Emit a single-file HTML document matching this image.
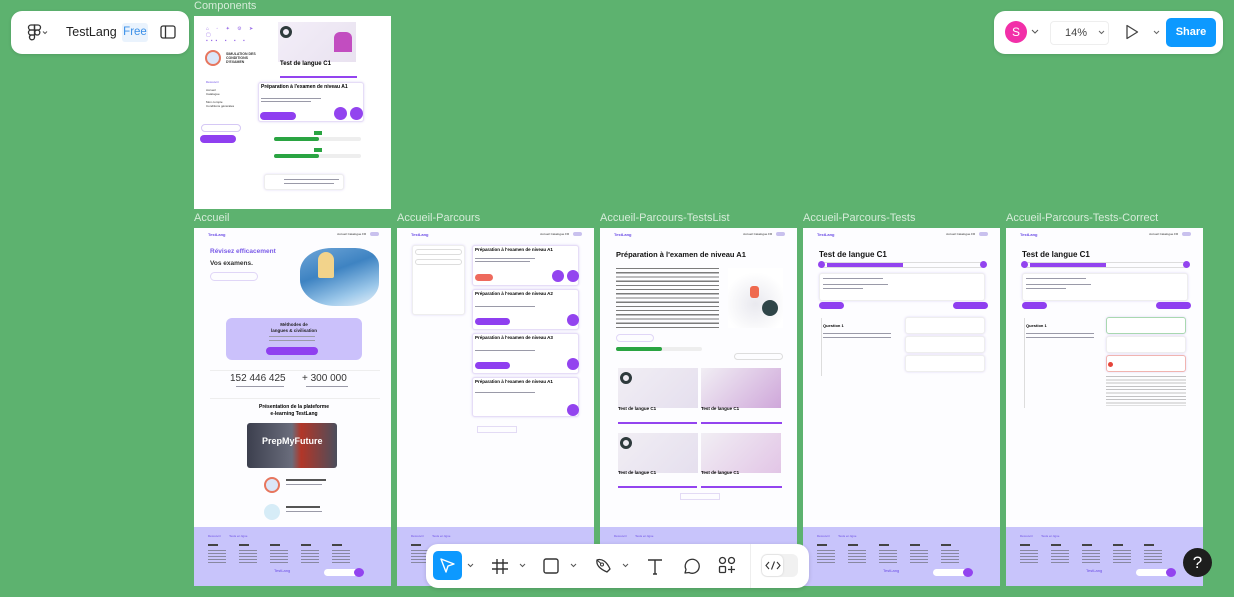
<!DOCTYPE html>
<html><head><meta charset="utf-8">
<style>
*{margin:0;padding:0;box-sizing:border-box}
body{width:1234px;height:597px;background:#5db26f;font-family:"Liberation Sans",sans-serif;position:relative;overflow:hidden}
.a{position:absolute}
.lbl{position:absolute;font-size:11px;color:#d6ecd9}
.fr{position:absolute;top:228px;width:197px;height:358px;background:#fdfdff;overflow:hidden}
.fr .a{position:absolute}
.nav{top:4px;left:14px;font-size:4px;color:#6b4ce6;font-weight:bold}
.navr{top:4px;right:12px;font-size:3px;color:#333}
.tog{display:inline-block;width:9px;height:4px;background:#c9c1ee;border-radius:2px;vertical-align:middle;margin-left:3px}
.ft{left:0;top:299px;width:197px;height:59px;background:#c8c4fb}
.ftl{left:14px;top:306px;font-size:3px;color:#6b4ce6}
.ftc{left:14px;top:316px;width:150px;height:2px;background:repeating-linear-gradient(90deg,#444 0 10px,transparent 10px 31px)}
.ftd{left:14px;top:322px;width:150px;height:14px;background:repeating-linear-gradient(180deg,#8888a0 0 1px,transparent 1px 3px);-webkit-mask:repeating-linear-gradient(90deg,#000 0 18px,transparent 18px 31px);mask:repeating-linear-gradient(90deg,#000 0 18px,transparent 18px 31px)}
.ftn{left:80px;top:340px;font-size:4px;color:#6b4ce6}
.ftb{left:130px;top:341px;width:36px;height:7px;background:#fff;border-radius:4px}
.ftp{left:160px;top:340px;width:10px;height:9px;border-radius:50%;background:#9344ef}
.t{height:1.5px;background:#9a9aa8;position:absolute}
.pb{background:#8f3ff0;border-radius:4px;position:absolute}
.card{position:absolute;background:#fff;border:1px solid #e6ddf7;border-radius:3px;box-shadow:0 0 2px rgba(150,120,220,.3)}
.circ{position:absolute;border-radius:50%;background:#9344ef}
.pill{position:absolute;background:#fff;border-radius:10px;box-shadow:0 1px 3px rgba(0,0,0,.12)}
</style></head><body>

<div class="pill" style="left:11px;top:11px;width:178px;height:43px;border-radius:11px">
  <svg class="a" style="left:16px;top:13px" width="34" height="18" viewBox="0 0 34 18">
    <g fill="none" stroke="#333" stroke-width="1.3"><path d="M4 1h3.5v5H4a2.5 2.5 0 0 1 0-5z"/><path d="M7.5 1H11a2.5 2.5 0 0 1 0 5H7.5z"/><path d="M4 6h3.5v5H4a2.5 2.5 0 0 1 0-5z"/><circle cx="10.3" cy="8.5" r="2.5"/><path d="M4 11h3.5v2.5A2.5 2.5 0 1 1 4 11z"/></g>
    <path d="M16 7.5l2 2 2-2" fill="none" stroke="#555" stroke-width="1"/>
  </svg>
  <div class="a" style="left:55px;top:14px;font-size:12.5px;color:#222">TestLang</div>
  <div class="a" style="left:111px;top:12px;width:26px;height:19px;font-size:11.5px;color:#3a8fe8;background:#eaf3fd;border-radius:3px;text-align:center;line-height:19px">Free</div>
  <svg class="a" style="left:149px;top:14px" width="16" height="14"><rect x="1" y="1" width="14" height="12" rx="2" fill="none" stroke="#333" stroke-width="1.3"/><line x1="5.5" y1="1" x2="5.5" y2="13" stroke="#333" stroke-width="1.3"/></svg>
</div>

<div class="pill" style="left:994px;top:11px;width:229px;height:43px;border-radius:11px">
  <div class="a" style="left:11px;top:10px;width:22px;height:22px;border-radius:50%;background:#f22fa8;color:#fff;font-size:12px;text-align:center;line-height:22px">S</div>
  <svg class="a" style="left:37px;top:18px" width="8" height="6"><path d="M1 1l3 3 3-3" fill="none" stroke="#555"/></svg>
  <div class="a" style="left:56px;top:10px;width:59px;height:24px;border:1px solid #eee;border-radius:4px;font-size:11px;color:#444;line-height:22px;padding-left:14px">14%</div>
  <svg class="a" style="left:104px;top:19px" width="7" height="5"><path d="M1 1l2.5 2.5L6 1" fill="none" stroke="#666"/></svg>
  <svg class="a" style="left:131px;top:13px" width="14" height="16"><path d="M2 1.5v13l10.5-6.5z" fill="none" stroke="#444" stroke-width="1.3" stroke-linejoin="round"/></svg>
  <svg class="a" style="left:159px;top:19px" width="7" height="5"><path d="M1 1l2.5 2.5L6 1" fill="none" stroke="#666"/></svg>
  <div class="a" style="left:172px;top:7px;width:50px;height:29px;border-radius:5px;background:#0d99ff;color:#fff;font-size:11px;font-weight:bold;text-align:center;line-height:29px">Share</div>
</div>

<div class="lbl" style="left:194px;top:0px">Components</div>
<div class="a" style="left:194px;top:16px;width:197px;height:193px;background:#fff">
  <div class="a" style="left:12px;top:10px;width:60px;height:18px;font-size:5px;color:#9a6ee8;letter-spacing:3px">⌂ ◦ ✦ ⚙ ➤ ▢<br>▪▪▪ ▪ ▪ ▪</div>
  <div class="a" style="left:11px;top:34px;width:16px;height:16px;border-radius:50%;background:#dbe6f8;border:2px solid #e7765e"></div>
  <div class="a" style="left:32px;top:36px;font-size:3.5px;font-weight:bold;color:#333;width:40px">SIMULATION DES CONDITIONS D'EXAMEN</div>
  <div class="a" style="left:84px;top:6px;width:78px;height:40px;background:linear-gradient(135deg,#f3eef8,#e9e2f0)"></div>
  <div class="a" style="left:86px;top:10px;width:12px;height:12px;border-radius:50%;border:3px solid #2e3a3c"></div>
  <div class="a" style="left:140px;top:16px;width:18px;height:20px;background:#c24dc0;border-radius:6px 6px 0 0"></div>
  <div class="a" style="left:86px;top:45px;font-size:6px;font-weight:bold">Test de langue C1</div>
  <div class="a" style="left:86px;top:60px;width:77px;height:2px;background:#9344ef"></div>
  <div class="a" style="left:12px;top:64px;font-size:3px;color:#6b4ce6">Découvrir</div>
  <div class="a" style="left:12px;top:72px;font-size:3px;color:#333;line-height:4px">Accueil<br>Catalogue<br><br>Mon compte<br>Conditions générales</div>
  <div class="card" style="left:64px;top:66px;width:106px;height:40px"></div>
  <div class="a" style="left:67px;top:68px;font-size:5px;font-weight:bold">Préparation à l'examen de niveau A1</div>
  <div class="t" style="left:67px;top:82px;width:60px;height:1px"></div>
  <div class="t" style="left:67px;top:85px;width:50px;height:1px"></div>
  <div class="pb" style="left:66px;top:96px;width:36px;height:8px"></div>
  <div class="circ" style="left:140px;top:91px;width:13px;height:13px"></div>
  <div class="circ" style="left:156px;top:91px;width:13px;height:13px"></div>
  <div class="a" style="left:7px;top:108px;width:40px;height:8px;border:1px solid #d5c8f5;border-radius:4px"></div>
  <div class="pb" style="left:6px;top:119px;width:36px;height:8px"></div>
  <div class="a" style="left:80px;top:121px;width:87px;height:4px;background:#eee;border-radius:2px"></div>
  <div class="a" style="left:80px;top:121px;width:45px;height:4px;background:#2aa442;border-radius:2px"></div>
  <div class="a" style="left:120px;top:115px;width:8px;height:4px;background:#2aa442"></div>
  <div class="a" style="left:80px;top:138px;width:87px;height:4px;background:#eee;border-radius:2px"></div>
  <div class="a" style="left:80px;top:138px;width:45px;height:4px;background:#2aa442;border-radius:2px"></div>
  <div class="a" style="left:120px;top:132px;width:8px;height:4px;background:#2aa442"></div>
  <div class="card" style="left:70px;top:158px;width:80px;height:16px;border-color:#eee"></div>
  <div class="t" style="left:90px;top:163px;width:55px;height:1px"></div>
  <div class="t" style="left:90px;top:167px;width:50px;height:1px"></div>
</div>

<div class="lbl" style="left:194px;top:212px">Accueil</div>
<div class="fr" style="left:194px">
  <div class="a nav">TestLang</div><div class="a navr">Accueil Catalogue FR <span class="tog"></span></div>
  <div class="a" style="left:16px;top:20px;font-size:6.5px;font-weight:bold;color:#7a5be8">Révisez efficacement</div>
  <div class="a" style="left:16px;top:32px;font-size:6.5px;font-weight:bold;color:#333">Vos examens.</div>
  <div class="a" style="left:16px;top:44px;width:48px;height:9px;border:1px solid #e0d6f7;border-radius:5px"></div>
  <div class="a" style="left:106px;top:20px;width:79px;height:58px;border-radius:40% 30% 40% 45%;background:linear-gradient(160deg,#6fa6d8 0%,#3e83c2 40%,#9cc8ea 75%,#e9f2fa 100%)"></div>
  <div class="a" style="left:124px;top:24px;width:16px;height:26px;background:#f2d38b;border-radius:8px 8px 2px 2px"></div>
  <div class="a" style="left:32px;top:90px;width:136px;height:42px;background:#cbc1fb;border-radius:6px"></div>
  <div class="a" style="left:32px;top:94px;width:136px;text-align:center;font-size:4.5px;font-weight:bold;color:#222;line-height:6px">Méthodes de<br>langues &amp; civilisation</div>
  <div class="t" style="left:75px;top:108px;width:46px;height:1px"></div>
  <div class="t" style="left:75px;top:112px;width:46px;height:1px"></div>
  <div class="pb" style="left:72px;top:119px;width:52px;height:8px"></div>
  <div class="a" style="left:16px;top:142px;width:170px;height:1px;background:#eee"></div>
  <div class="a" style="left:36px;top:145px;font-size:10px;color:#333">152 446 425</div>
  <div class="a" style="left:108px;top:145px;font-size:10px;color:#333">+ 300 000</div>
  <div class="t" style="left:42px;top:158px;width:48px;height:1px"></div>
  <div class="t" style="left:112px;top:158px;width:42px;height:1px"></div>
  <div class="a" style="left:16px;top:170px;width:170px;height:1px;background:#eee"></div>
  <div class="a" style="left:30px;top:176px;width:140px;text-align:center;font-size:5px;font-weight:bold;line-height:6.5px">Présentation de la plateforme<br>e-learning TestLang</div>
  <div class="a" style="left:53px;top:195px;width:90px;height:45px;border-radius:3px;background:linear-gradient(90deg,#3c3f4e,#6a6d7c 50%,#b23628 60%,#4b4e5c)"></div>
  <div class="a" style="left:68px;top:208px;font-size:9px;color:#fff;font-weight:bold">PrepMyFuture</div>
  <div class="a" style="left:70px;top:249px;width:16px;height:16px;border-radius:50%;background:#dbe6f8;border:2px solid #e7765e"></div>
  <div class="a" style="left:92px;top:251px;width:40px;height:2px;background:#555"></div>
  <div class="t" style="left:92px;top:256px;width:36px;height:1px"></div>
  <div class="a" style="left:70px;top:276px;width:16px;height:16px;border-radius:50%;background:#d6ecf7"></div>
  <div class="a" style="left:92px;top:278px;width:34px;height:2px;background:#555"></div>
  <div class="t" style="left:92px;top:283px;width:36px;height:1px"></div>
  <div class="a ft"></div><div class="a ftl">Découvrir &nbsp;&nbsp;&nbsp;&nbsp;&nbsp;&nbsp;&nbsp;&nbsp; Tests en ligne</div>
  <div class="a ftc"></div><div class="a ftd"></div><div class="a ftn">TestLang</div><div class="a ftb"></div><div class="a ftp"></div>
</div>

<div class="lbl" style="left:397px;top:212px">Accueil-Parcours</div>
<div class="fr" style="left:397px">
  <div class="a nav">TestLang</div><div class="a navr">Accueil Catalogue FR <span class="tog"></span></div>
  <div class="card" style="left:15px;top:17px;width:53px;height:70px;border-color:#eee"></div>
  <div class="a" style="left:18px;top:21px;width:47px;height:6px;border:1px solid #ddd;border-radius:3px"></div>
  <div class="a" style="left:18px;top:31px;width:47px;height:6px;border:1px solid #ddd;border-radius:3px"></div>
  <div class="card" style="left:75px;top:17px;width:107px;height:41px"></div>
  <div class="a" style="left:78px;top:19px;font-size:4.5px;font-weight:bold">Préparation à l'examen de niveau A1</div>
  <div class="t" style="left:78px;top:30px;width:60px;height:1px"></div><div class="t" style="left:78px;top:33px;width:55px;height:1px"></div>
  <div class="a" style="left:78px;top:46px;width:18px;height:7px;background:#ee6a5d;border-radius:4px"></div>
  <div class="circ" style="left:155px;top:42px;width:12px;height:12px"></div><div class="circ" style="left:170px;top:42px;width:12px;height:12px"></div>
  <div class="card" style="left:75px;top:61px;width:107px;height:41px"></div>
  <div class="a" style="left:78px;top:63px;font-size:4.5px;font-weight:bold;width:90px">Préparation à l'examen de niveau A2</div>
  <div class="t" style="left:78px;top:78px;width:60px;height:1px"></div>
  <div class="pb" style="left:78px;top:90px;width:35px;height:7px"></div><div class="circ" style="left:170px;top:86px;width:12px;height:12px"></div>
  <div class="card" style="left:75px;top:105px;width:107px;height:41px"></div>
  <div class="a" style="left:78px;top:107px;font-size:4.5px;font-weight:bold;width:90px">Préparation à l'examen de niveau A3</div>
  <div class="t" style="left:78px;top:122px;width:60px;height:1px"></div>
  <div class="pb" style="left:78px;top:134px;width:35px;height:7px"></div><div class="circ" style="left:170px;top:130px;width:12px;height:12px"></div>
  <div class="card" style="left:75px;top:149px;width:107px;height:40px"></div>
  <div class="a" style="left:78px;top:151px;font-size:4.5px;font-weight:bold">Préparation à l'examen de niveau A1</div>
  <div class="t" style="left:78px;top:164px;width:60px;height:1px"></div>
  <div class="circ" style="left:170px;top:176px;width:12px;height:12px"></div>
  <div class="a" style="left:80px;top:198px;width:40px;height:7px;border:1px solid #e3dbf5"></div>
  <div class="a ft"></div><div class="a ftl">Découvrir &nbsp;&nbsp;&nbsp;&nbsp;&nbsp;&nbsp;&nbsp;&nbsp; Tests en ligne</div>
  <div class="a ftc"></div><div class="a ftd"></div><div class="a ftn">TestLang</div><div class="a ftb"></div><div class="a ftp"></div>
</div>

<div class="lbl" style="left:600px;top:212px">Accueil-Parcours-TestsList</div>
<div class="fr" style="left:600px">
  <div class="a nav">TestLang</div><div class="a navr">Accueil Catalogue FR <span class="tog"></span></div>
  <div class="a" style="left:16px;top:22px;font-size:7.5px;font-weight:bold;color:#111">Préparation à l'examen de niveau A1</div>
  <div class="a" style="left:16px;top:40px;width:103px;height:62px;background:repeating-linear-gradient(180deg,#444 0 1.2px,transparent 1.2px 4.2px);opacity:.7"></div>
  <div class="a" style="left:128px;top:40px;width:55px;height:60px;background:radial-gradient(circle at 50% 60%,#e9e9ef,#fff 70%)"></div>
  <div class="a" style="left:150px;top:58px;width:9px;height:12px;background:#ef6a4f;border-radius:3px"></div>
  <div class="a" style="left:162px;top:72px;width:16px;height:16px;border-radius:50%;background:#2f4548"></div>
  <div class="a" style="left:16px;top:106px;width:38px;height:8px;border:1px solid #e0d6f7;border-radius:4px"></div>
  <div class="a" style="left:16px;top:119px;width:86px;height:4px;background:#eee;border-radius:2px"></div>
  <div class="a" style="left:16px;top:119px;width:46px;height:4px;background:#2aa442;border-radius:2px"></div>
  <div class="a" style="left:134px;top:125px;width:49px;height:7px;border:1px solid #ddd;border-radius:4px"></div>
  <div class="a" style="left:18px;top:140px;width:80px;height:40px;background:linear-gradient(135deg,#f1eef4,#e5dfee)"></div>
  <div class="a" style="left:101px;top:140px;width:80px;height:40px;background:linear-gradient(135deg,#f1eef4,#cfa7da)"></div>
  <div class="a" style="left:20px;top:144px;width:12px;height:12px;border-radius:50%;border:3px solid #2e3a3c"></div>
  <div class="a" style="left:18px;top:178px;font-size:4.5px;font-weight:bold">Test de langue C1</div>
  <div class="a" style="left:101px;top:178px;font-size:4.5px;font-weight:bold">Test de langue C1</div>
  <div class="a" style="left:18px;top:194px;width:79px;height:2px;background:#9344ef"></div>
  <div class="a" style="left:101px;top:194px;width:81px;height:2px;background:#9344ef"></div>
  <div class="a" style="left:18px;top:205px;width:80px;height:40px;background:linear-gradient(135deg,#f1eef4,#e5dfee)"></div>
  <div class="a" style="left:101px;top:205px;width:80px;height:40px;background:linear-gradient(135deg,#f1eef4,#e2c5e6)"></div>
  <div class="a" style="left:20px;top:209px;width:12px;height:12px;border-radius:50%;border:3px solid #2e3a3c"></div>
  <div class="a" style="left:18px;top:242px;font-size:4.5px;font-weight:bold">Test de langue C1</div>
  <div class="a" style="left:101px;top:242px;font-size:4.5px;font-weight:bold">Test de langue C1</div>
  <div class="a" style="left:18px;top:258px;width:79px;height:2px;background:#9344ef"></div>
  <div class="a" style="left:101px;top:258px;width:81px;height:2px;background:#9344ef"></div>
  <div class="a" style="left:80px;top:265px;width:40px;height:7px;border:1px solid #e3dbf5"></div>
  <div class="a ft"></div><div class="a ftl">Découvrir &nbsp;&nbsp;&nbsp;&nbsp;&nbsp;&nbsp;&nbsp;&nbsp; Tests en ligne</div>
  <div class="a ftc"></div><div class="a ftd"></div><div class="a ftn">TestLang</div><div class="a ftb"></div><div class="a ftp"></div>
</div>

<div class="lbl" style="left:803px;top:212px">Accueil-Parcours-Tests</div>
<div class="fr" style="left:803px">
  <div class="a nav">TestLang</div><div class="a navr">Accueil Catalogue FR <span class="tog"></span></div>
  <div class="a" style="left:16px;top:22px;font-size:8px;font-weight:bold;color:#111">Test de langue C1</div>
  <div class="a" style="left:16px;top:34px;width:166px;height:6px;border:1px solid #ddd;border-radius:3px"></div>
  <div class="a" style="left:24px;top:35px;width:76px;height:4px;background:#9344ef"></div>
  <div class="circ" style="left:15px;top:33px;width:7px;height:7px"></div><div class="circ" style="left:177px;top:33px;width:7px;height:7px"></div>
  <div class="card" style="left:16px;top:45px;width:166px;height:28px;border-color:#eee"></div>
  <div class="t" style="left:20px;top:50px;width:60px;height:1px"></div><div class="t" style="left:20px;top:56px;width:65px;height:1px"></div><div class="t" style="left:20px;top:60px;width:40px;height:1px"></div>
  <div class="pb" style="left:16px;top:74px;width:25px;height:7px"></div>
  <div class="pb" style="left:150px;top:74px;width:35px;height:7px"></div>
  <div class="a" style="left:18px;top:90px;width:1px;height:58px;background:#ddd"></div>
  <div class="a" style="left:20px;top:95px;font-size:4px;font-weight:bold">Question 1</div>
  <div class="t" style="left:20px;top:105px;width:68px;height:1px"></div><div class="t" style="left:20px;top:109px;width:68px;height:1px"></div>
  <div class="card" style="left:102px;top:89px;width:80px;height:17px;border-color:#eee"></div>
  <div class="card" style="left:102px;top:108px;width:80px;height:17px;border-color:#eee"></div>
  <div class="card" style="left:102px;top:127px;width:80px;height:17px;border-color:#eee"></div>
  <div class="a ft"></div><div class="a ftl">Découvrir &nbsp;&nbsp;&nbsp;&nbsp;&nbsp;&nbsp;&nbsp;&nbsp; Tests en ligne</div>
  <div class="a ftc"></div><div class="a ftd"></div><div class="a ftn">TestLang</div><div class="a ftb"></div><div class="a ftp"></div>
</div>

<div class="lbl" style="left:1006px;top:212px">Accueil-Parcours-Tests-Correct</div>
<div class="fr" style="left:1006px">
  <div class="a nav">TestLang</div><div class="a navr">Accueil Catalogue FR <span class="tog"></span></div>
  <div class="a" style="left:16px;top:22px;font-size:8px;font-weight:bold;color:#111">Test de langue C1</div>
  <div class="a" style="left:16px;top:34px;width:166px;height:6px;border:1px solid #ddd;border-radius:3px"></div>
  <div class="a" style="left:24px;top:35px;width:76px;height:4px;background:#9344ef"></div>
  <div class="circ" style="left:15px;top:33px;width:7px;height:7px"></div><div class="circ" style="left:177px;top:33px;width:7px;height:7px"></div>
  <div class="card" style="left:16px;top:45px;width:166px;height:28px;border-color:#eee"></div>
  <div class="t" style="left:20px;top:50px;width:60px;height:1px"></div><div class="t" style="left:20px;top:56px;width:65px;height:1px"></div><div class="t" style="left:20px;top:60px;width:40px;height:1px"></div>
  <div class="pb" style="left:16px;top:74px;width:25px;height:7px"></div>
  <div class="pb" style="left:150px;top:74px;width:35px;height:7px"></div>
  <div class="a" style="left:18px;top:90px;width:1px;height:90px;background:#ddd"></div>
  <div class="a" style="left:20px;top:95px;font-size:4px;font-weight:bold">Question 1</div>
  <div class="t" style="left:20px;top:105px;width:68px;height:1px"></div><div class="t" style="left:20px;top:109px;width:68px;height:1px"></div>
  <div class="card" style="left:100px;top:89px;width:80px;height:17px;border-color:#a9d8b0"></div>
  <div class="card" style="left:100px;top:108px;width:80px;height:17px;border-color:#eee"></div>
  <div class="card" style="left:100px;top:127px;width:80px;height:17px;border-color:#f1b4b0"></div>
  <div class="a" style="left:102px;top:134px;width:5px;height:5px;border-radius:50%;background:#e5453a"></div>
  <div class="a" style="left:100px;top:148px;width:80px;height:30px;background:repeating-linear-gradient(180deg,#888 0 1px,transparent 1px 3.3px);opacity:.5"></div>
  <div class="a ft"></div><div class="a ftl">Découvrir &nbsp;&nbsp;&nbsp;&nbsp;&nbsp;&nbsp;&nbsp;&nbsp; Tests en ligne</div>
  <div class="a ftc"></div><div class="a ftd"></div><div class="a ftn">TestLang</div><div class="a ftb"></div><div class="a ftp"></div>
</div>

<div class="pill" style="left:426px;top:544px;width:383px;height:44px;border-radius:12px;box-shadow:0 1px 4px rgba(0,0,0,.15)">
  <div class="a" style="left:7px;top:7px;width:29px;height:29px;background:#0d99ff;border-radius:5px"></div>
  <svg class="a" style="left:13px;top:13px" width="18" height="18"><path d="M2 2l13 5-6 2-2 6z" fill="none" stroke="#fff" stroke-width="1.4" stroke-linejoin="round"/></svg>
  <svg class="a" style="left:41px;top:19px" width="7" height="5"><path d="M1 1l2.5 2.5L6 1" fill="none" stroke="#555"/></svg>
  <svg class="a" style="left:65px;top:13px" width="18" height="18"><path d="M6 2v15M12 2v15M1 6h16M1 12h16" stroke="#333" stroke-width="1.4"/></svg>
  <svg class="a" style="left:93px;top:19px" width="7" height="5"><path d="M1 1l2.5 2.5L6 1" fill="none" stroke="#555"/></svg>
  <svg class="a" style="left:116px;top:13px" width="18" height="18"><rect x="2" y="2" width="14" height="14" rx="2" fill="none" stroke="#333" stroke-width="1.4"/></svg>
  <svg class="a" style="left:144px;top:19px" width="7" height="5"><path d="M1 1l2.5 2.5L6 1" fill="none" stroke="#555"/></svg>
  <svg class="a" style="left:168px;top:12px" width="20" height="20"><path d="M3 4c5-2 10 2 13 9l-3 3C6 13 2 9 3 4z" fill="none" stroke="#333" stroke-width="1.3" stroke-linejoin="round"/><circle cx="8" cy="8.5" r="1.5" fill="none" stroke="#333"/><path d="M3 4l4 3.5" stroke="#333"/></svg>
  <svg class="a" style="left:196px;top:19px" width="7" height="5"><path d="M1 1l2.5 2.5L6 1" fill="none" stroke="#555"/></svg>
  <svg class="a" style="left:220px;top:13px" width="18" height="18"><path d="M2 3h14M9 3v14M7 17h4" fill="none" stroke="#333" stroke-width="1.4"/></svg>
  <svg class="a" style="left:256px;top:13px" width="18" height="18"><path d="M3 16l1-3.5A7 7 0 1 1 7 15.5z" fill="none" stroke="#333" stroke-width="1.3" stroke-linejoin="round"/></svg>
  <svg class="a" style="left:292px;top:12px" width="18" height="18"><circle cx="4.5" cy="4.5" r="3" fill="none" stroke="#333" stroke-width="1.3"/><circle cx="13.5" cy="4.5" r="3" fill="none" stroke="#333" stroke-width="1.3"/><rect x="1.5" y="10.5" width="6" height="6" rx="1" fill="none" stroke="#333" stroke-width="1.3"/><path d="M13.5 10v7M10 13.5h7" stroke="#333" stroke-width="1.3"/></svg>
  <div class="a" style="left:324px;top:0;width:1px;height:44px;background:#eee"></div>
  <div class="a" style="left:335px;top:10px;width:37px;height:23px;background:#f1f1f1;border-radius:6px"></div>
  <div class="a" style="left:336px;top:11px;width:21px;height:21px;background:#fff;border-radius:5px;box-shadow:0 0 2px rgba(0,0,0,.15)"></div>
  <svg class="a" style="left:339px;top:16px" width="16" height="11"><path d="M4 2L1 5.5 4 9M12 2l3 3.5L12 9M9.5 1.5l-3 8" fill="none" stroke="#333" stroke-width="1.1"/></svg>
</div>

<div class="a" style="left:1183px;top:548px;width:29px;height:29px;border-radius:50%;background:#1e1e1e;color:#fff;font-size:17px;text-align:center;line-height:29px">?</div>
</body></html>
